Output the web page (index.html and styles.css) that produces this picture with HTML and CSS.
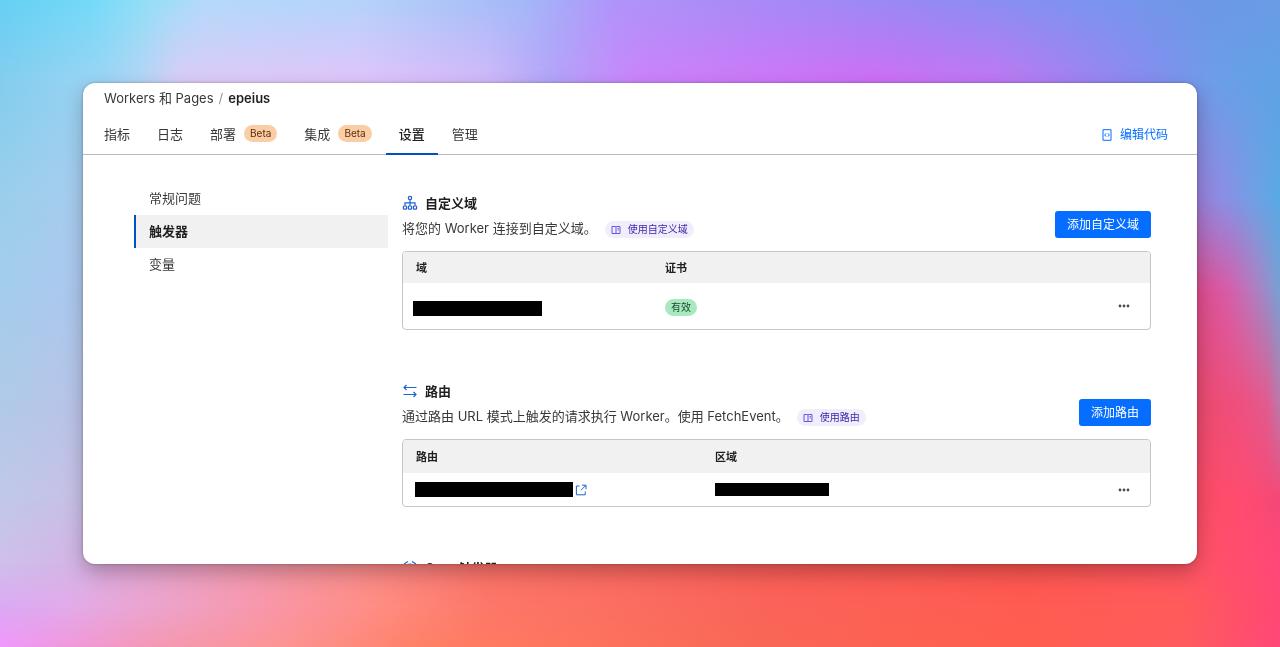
FILE: index.html
```html
<!DOCTYPE html>
<html lang="zh-CN">
<head>
<meta charset="utf-8">
<meta name="viewport" content="width=device-width, initial-scale=1">
<title>epeius - Workers 和 Pages</title>
<link rel="stylesheet" href="styles.css">
</head>
<body>
<div class="backdrop" aria-hidden="true">
  <div class="band band-1"></div>
  <div class="band band-2"></div>
  <div class="band band-3"></div>
  <div class="band band-4"></div>
  <div class="band band-5"></div>
  <div class="band band-6"></div>
  <div class="band band-7"></div>
  <div class="band band-8"></div>
  <div class="band band-9"></div>
</div>
<div class="window">
  <header class="header">
    <nav class="breadcrumb" aria-label="位置">
      <a href="#">Workers 和 Pages</a>
      <span class="breadcrumb-separator">/</span>
      <strong>epeius</strong>
    </nav>
    <div class="tabbar">
      <nav class="tabs" aria-label="标签页">
        <a class="tab" href="#">指标</a>
        <a class="tab" href="#">日志</a>
        <a class="tab" href="#">部署<span class="beta">Beta</span></a>
        <a class="tab" href="#">集成<span class="beta">Beta</span></a>
        <a class="tab tab-active" href="#" aria-current="page">设置</a>
        <a class="tab" href="#">管理</a>
      </nav>
      <a class="edit-link" href="#">
        <svg width="12" height="12" viewBox="0 0 12 12" fill="none" stroke="currentColor"><path d="M2 .7h8v10.6H2z"/><path d="M5 4.4 3.7 6 5 7.6M7 4.4 8.3 6 7 7.6"/></svg>
        编辑代码
      </a>
    </div>
  </header>

  <div class="content">
    <nav class="sidebar" aria-label="设置">
      <a class="side-item" href="#">常规问题</a>
      <a class="side-item side-item-active" href="#" aria-current="page">触发器</a>
      <a class="side-item" href="#">变量</a>
    </nav>

    <main class="sections">
      <section>
        <div class="section-head">
          <div class="section-intro">
            <h2>
              <svg width="16" height="16" viewBox="0 0 16 16" fill="none" stroke="currentColor" stroke-width="1.2"><circle cx="8" cy="3" r="1.7"/><path d="M8 4.7v6M3 10.8V7.9h10v2.9"/><rect x="1.4" y="11" width="3.2" height="3.2" rx=".8"/><rect x="6.4" y="11" width="3.2" height="3.2" rx=".8"/><rect x="11.4" y="11" width="3.2" height="3.2" rx=".8"/></svg>
              自定义域
            </h2>
            <p>将您的 Worker 连接到自定义域。
              <a class="doc-link" href="#"><svg width="10" height="10" viewBox="0 0 10 10" fill="none" stroke="currentColor"><path d="M1 1.5h3.2L5 2l.8-.5H9v7H1zM5 2v6.5M6.6 3.5h1.2M6.6 5h1.2"/></svg>使用自定义域</a>
            </p>
          </div>
          <button class="primary" type="button">添加自定义域</button>
        </div>
        <div class="table-frame">
          <table class="domains">
            <thead><tr><th class="col-name">域</th><th>证书</th><th class="col-menu"></th></tr></thead>
            <tbody><tr>
              <td class="cell-domain"><span class="redacted redacted-domain"></span></td>
              <td><span class="status">有效</span></td>
              <td class="col-menu"><button class="more" type="button" aria-label="更多"><svg width="12" height="4" viewBox="0 0 12 4" fill="currentColor"><circle cx="2" cy="2" r="1.4"/><circle cx="6" cy="2" r="1.4"/><circle cx="10" cy="2" r="1.4"/></svg></button></td>
            </tr></tbody>
          </table>
        </div>
      </section>

      <section>
        <div class="section-head">
          <div class="section-intro">
            <h2>
              <svg width="16" height="16" viewBox="0 0 16 16" fill="none" stroke="currentColor" stroke-width="1.2"><path d="M14.5 4.5H2M4.5 2 2 4.5 4.5 7M1.5 11.5H14M11.5 9l2.5 2.5-2.5 2.5"/></svg>
              路由
            </h2>
            <p>通过路由 URL 模式上触发的请求执行 Worker。使用 FetchEvent。
              <a class="doc-link" href="#"><svg width="10" height="10" viewBox="0 0 10 10" fill="none" stroke="currentColor"><path d="M1 1.5h3.2L5 2l.8-.5H9v7H1zM5 2v6.5M6.6 3.5h1.2M6.6 5h1.2"/></svg>使用路由</a>
            </p>
          </div>
          <button class="primary" type="button">添加路由</button>
        </div>
        <div class="table-frame">
          <table class="routes">
            <thead><tr><th class="col-name">路由</th><th>区域</th><th class="col-menu"></th></tr></thead>
            <tbody><tr>
              <td><a class="route-link" href="#" aria-label="打开路由"><span class="redacted redacted-route"></span><svg width="12" height="12" viewBox="0 0 12 12" fill="none" stroke="currentColor"><path d="M4.5 2H1.4v8.8h8.8V7.5M7 1.2h4v4M11 1.2 6 6.2"/></svg></a></td>
              <td><span class="redacted redacted-zone"></span></td>
              <td class="col-menu"><button class="more" type="button" aria-label="更多"><svg width="12" height="4" viewBox="0 0 12 4" fill="currentColor"><circle cx="2" cy="2" r="1.4"/><circle cx="6" cy="2" r="1.4"/><circle cx="10" cy="2" r="1.4"/></svg></button></td>
            </tr></tbody>
          </table>
        </div>
      </section>

      <section>
        <h2>
          <svg width="16" height="16" viewBox="0 0 16 16" fill="none" stroke="currentColor" stroke-width="1.2"><circle cx="8" cy="9" r="5"/><path d="M8 6v3l2 1.5M2 4l4-2.5M14 4l-4-2.5"/></svg>
          Cron 触发器
        </h2>
      </section>
    </main>
  </div>
</div>
</body>
</html>
```

FILE: styles.css
```css
* {
  box-sizing: border-box;
}

body {
  margin: 0;
  height: 100vh;
  padding: 83px;
  display: flex;
  overflow: hidden;
  color: #36393a;
  font: 13px/20px Inter, "Noto Sans CJK SC", sans-serif;
}

/* Colour mesh: each band fades in over the previous one on its way down. */
.backdrop {
  position: fixed;
  inset: 0;
  z-index: -1;
}

.band {
  position: absolute;
  inset: 0;
}

.band-1 {
  background: linear-gradient(to right, #66d0f4, #74daf8 7%, #98dff6 12%, #b4dafa 16%, #b4d4fa 28%, #a4b8f8 41%, #b094fa 48%, #a88af6 60%, #968af4 72%, #7c94f0 85%, #6c98e6 95%, #6a9ce6);
}

.band-2 {
  background: linear-gradient(to right, #84cdee, #9cd4f4 8%, #b4d4f4 11%, #dccbf8 14%, #e2c4fa 28%, #d2b8fa 38%, #b4a4f8 43%, #cc82fb 50%, #d06ef4 68%, #c078f2 78%, #a880f0 83%, #848eee 90%, #6c9ee8 95%, #60a2e4);
  mask-image: linear-gradient(transparent, #000 13%);
}

.band-3 {
  background: linear-gradient(to right, #9acfea, #a8ccee 6%, #a07cd8 93%, #8890e4 96%, #70a0e4 98%, #58aae4);
  mask-image: linear-gradient(transparent 13%, #000 31%);
}

.band-4 {
  background: linear-gradient(to right, #a4cdec, #acc8ee 6%, #e04a88 93%, #d85ca8 96%, #b47cc0 98%, #78a0d4);
  mask-image: linear-gradient(transparent 31%, #000 45%);
}

.band-5 {
  background: linear-gradient(to right, #b0cae8, #b8c4e8 6%, #ea4a6c 93%, #ee5080 97%, #e05c90 99%, #b87cac);
  mask-image: linear-gradient(transparent 45%, #000 62%);
}

.band-6 {
  background: linear-gradient(to right, #c0c8e8, #c8c0e6 6%, #fa4c64 93%, #ff4c70 97%, #f44878);
  mask-image: linear-gradient(transparent 62%, #000 77%);
}

.band-7 {
  background: linear-gradient(to right, #cec0ea, #d4b4e6 6%, #dca8d8 9%, #ee9cb8 17%, #f88c8c 28%, #fa7068 38%, #f85c58 60%, #fc544e 80%, #ff5464 93%, #ff4878);
  mask-image: linear-gradient(transparent 77%, #000 87%);
}

.band-8 {
  background: linear-gradient(to right, #dca8f4, #e2aaea 5%, #eca4cc 12%, #f898ac 20%, #ff8c80 30%, #fc7868 38%, #fa6458 60%, #ff5c52 80%, #ff5c5a 92%, #ff4874);
  mask-image: linear-gradient(transparent 87%, #000 94%);
}

.band-9 {
  background: linear-gradient(to right, #f098fc, #f098e4 4%, #f498b4 12%, #fc9494 22%, #ff8066 33%, #ff7860 40%, #f96656 60%, #ff5e4e 80%, #ff5a60 93%, #ff4878);
  mask-image: linear-gradient(transparent 94%, #000 100%);
}

a {
  color: inherit;
  text-decoration: none;
}

button {
  font: inherit;
  border: 0;
  cursor: pointer;
}

svg {
  flex: none;
}

.window {
  flex: 1;
  min-width: 0;
  overflow: hidden;
  background: #fff;
  border-radius: 12px;
  box-shadow: 0 8px 20px rgba(0, 0, 0, 0.25), 0 0 3px rgba(0, 0, 0, 0.3);
}

.header {
  padding-top: 5px;
  border-bottom: 1px solid #b8babc;
}

.breadcrumb {
  display: flex;
  gap: 5px;
  padding: 0 21px;
}

.breadcrumb strong {
  color: #1d1f20;
  font-weight: 600;
}

.breadcrumb-separator {
  color: #92979b;
}

.tabbar {
  display: flex;
  justify-content: space-between;
  align-items: center;
  margin-top: 6px;
  padding: 0 29px 0 8px;
}

.tabs {
  display: flex;
  gap: 1px;
  margin-bottom: -1px;
}

.tab {
  display: flex;
  align-items: center;
  gap: 8px;
  height: 41px;
  padding: 0 13px;
  border-bottom: 2px solid transparent;
}

.tab-active {
  color: #1d1f20;
  font-weight: 500;
  border-color: #0051c3;
}

.beta {
  padding: 0 6px;
  border-radius: 9px;
  background: #fbcda5;
  color: #5a2d0c;
  font-size: 10px;
  line-height: 17px;
}

.edit-link {
  display: flex;
  align-items: center;
  gap: 7px;
  padding-top: 2px;
  color: #056dff;
  font-size: 12px;
}

.content {
  display: flex;
  gap: 14px;
  padding: 27px 46px 0 51px;
}

.sidebar {
  flex: 0 1 254px;
}

.side-item {
  display: block;
  padding: 0 13px;
  border-left: 2px solid transparent;
  line-height: 33px;
}

.side-item-active {
  border-color: #0051c3;
  background: #f1f1f1;
  color: #1d1f20;
  font-weight: 600;
}

.sections {
  flex: 1;
  min-width: 0;
  padding-top: 11px;
  display: flex;
  flex-direction: column;
  gap: 51px;
}

.section-head {
  display: flex;
  justify-content: space-between;
  align-items: flex-end;
  padding-bottom: 13px;
}

h2 {
  display: flex;
  align-items: center;
  gap: 7px;
  margin: 0;
  color: #1d1f20;
  font-size: 13px;
  font-weight: 600;
  line-height: 20px;
}

h2 svg {
  color: #1f62d0;
}

p {
  display: flex;
  flex-wrap: wrap;
  align-items: flex-end;
  gap: 8px;
  margin: 5px 0 0;
}

.doc-link {
  display: inline-flex;
  align-items: center;
  gap: 7px;
  padding: 0 6px;
  border-radius: 9px;
  background: #f1eefc;
  color: #3c1fa8;
  font-size: 10px;
  line-height: 17px;
}

.doc-link svg {
  color: #6e50dc;
}

.primary {
  padding: 4px 12px;
  border-radius: 3px;
  background: #056dff;
  color: #fff;
  font-size: 12px;
  line-height: 19px;
}

.table-frame {
  overflow: hidden;
  border: 1px solid #c4c6c8;
  border-radius: 4px;
}

table {
  width: 100%;
  table-layout: fixed;
  border-collapse: collapse;
}

th,
td {
  padding: 0 0 0 12px;
  text-align: left;
}

th {
  height: 31px;
  background: #f1f1f1;
  color: #1d1f20;
  font-size: 11px;
  font-weight: 600;
}

td {
  height: 46px;
}

.cell-domain {
  padding: 4px 0 0 10px;
}

.domains .col-name {
  width: 250px;
}

.routes .col-name {
  width: 300px;
}

.routes th,
.routes td {
  height: 33px;
}

th.col-name {
  padding-left: 13px;
}

.col-menu {
  width: 53px;
  padding: 0 20px 0 0;
}

.redacted {
  display: block;
  background: #000;
}

.redacted-domain {
  width: 129px;
  height: 15px;
}

.redacted-route {
  width: 158px;
  height: 15px;
}

.redacted-zone {
  width: 114px;
  height: 13px;
}

.route-link {
  display: flex;
  align-items: center;
  gap: 2px;
  color: #1f62d0;
}

.status {
  display: inline-block;
  padding: 0 6px;
  border-radius: 9px;
  background: #a8e9c0;
  color: #1d4a2c;
  font-size: 10px;
  line-height: 17px;
}

.more {
  display: flex;
  margin-left: auto;
  padding: 6px 0;
  background: none;
  color: #4a4d50;
}
```
